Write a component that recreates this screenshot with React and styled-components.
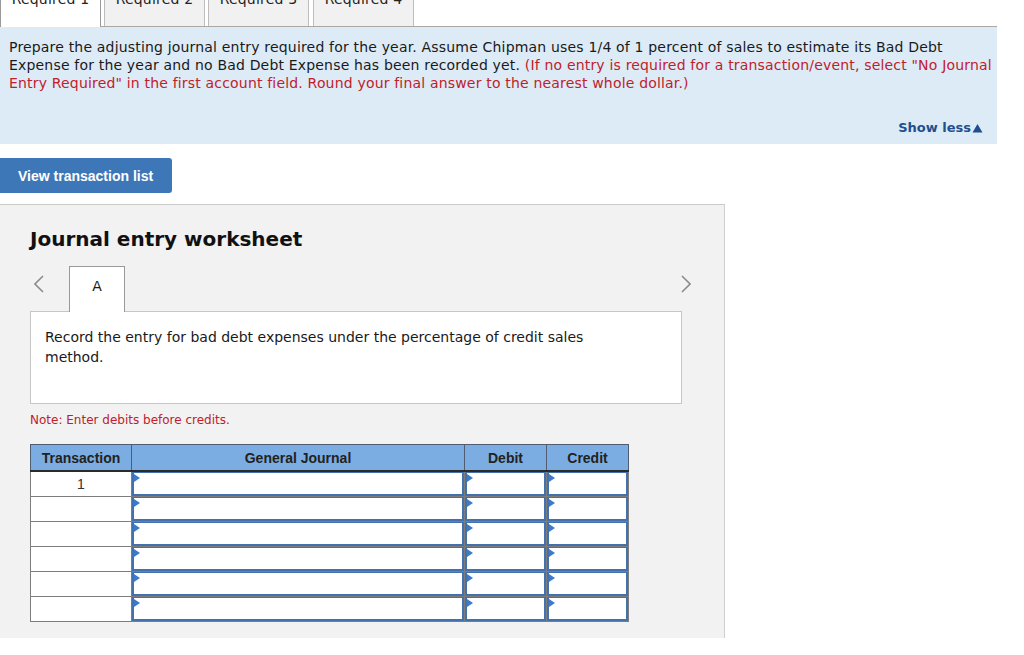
import styled, { createGlobalStyle } from "styled-components";

const GlobalStyle = createGlobalStyle`
  html, body {
    margin: 0;
    padding: 0;
    background: #ffffff;
    overflow: hidden;
  }
  body {
    font-family: "DejaVu Sans", Verdana, sans-serif;
    color: #1a1a1a;
  }
`;

const Page = styled.div`
  width: 997px;
`;

// top "Required" tabs, page is scrolled so their top is cut off
const TabBar = styled.div`
  display: flex;
  gap: 3px;
  height: 40px;
  margin-top: -14px;
  border-bottom: 1px solid #a8a8a8;
`;

const TopTab = styled.div`
  width: ${({ $w }) => $w}px;
  box-sizing: border-box;
  padding-top: 4px;
  text-align: center;
  font-size: 14px;
  line-height: 16px;
  letter-spacing: 0.2px;
  color: #222;
  border: 1px solid #bdbdbd;
  border-bottom: none;
  background: ${({ $active }) => ($active ? "#ffffff" : "#f1f1f1")};
  margin-bottom: ${({ $active }) => ($active ? "-1px" : "0")};
  height: ${({ $active }) => ($active ? "41px" : "40px")};
  ${({ $active }) => $active && "border-color: #9a9a9a;"}
  ${({ $gapLeft }) => $gapLeft && `margin-left: ${$gapLeft}px;`}
`;

const Instructions = styled.div`
  background: #ddebf7;
  height: 117px;
  box-sizing: border-box;
  padding: 11px 14px 0 9px;
  display: flex;
  flex-direction: column;
`;

const Prompt = styled.p`
  margin: 0 -14px 0 0;
  font-size: 14px;
  line-height: 18px;
  letter-spacing: 0.18px;
  color: #1a1a1a;
`;

const Hint = styled.span`
  color: #c0202a;
`;

const ShowLess = styled.div`
  margin-top: auto;
  margin-bottom: 9px;
  align-self: flex-end;
  font-size: 13px;
  font-weight: bold;
  color: #1f4f8d;
  display: flex;
  align-items: center;
  gap: 1px;
`;

const ListButton = styled.button`
  margin-top: 14px;
  width: 172px;
  height: 35px;
  border: none;
  border-radius: 0 3px 3px 0;
  background: #3d77b7;
  color: #ffffff;
  font-family: "Liberation Sans", Arial, sans-serif;
  font-size: 14px;
  font-weight: bold;
  text-align: left;
  padding: 0 0 0 18px;
  display: block;
`;

const Worksheet = styled.section`
  margin-top: 11px;
  width: 725px;
  height: 434px;
  box-sizing: border-box;
  background: #f2f2f2;
  border-top: 1px solid #c9c9c9;
  border-right: 1px solid #cfcfcf;
  padding: 21px 0 0 30px;
`;

const Heading = styled.h2`
  margin: 0;
  font-size: 20px;
  line-height: 26px;
  font-weight: bold;
  color: #111;
`;

const EntryNav = styled.div`
  margin-top: 14px;
  width: 665px;
  display: flex;
  align-items: flex-start;
`;

const Chevron = styled.div`
  width: ${({ $w }) => $w}px;
  height: 35px;
  box-sizing: border-box;
  padding-left: ${({ $pad }) => $pad || 0}px;
  display: flex;
  align-items: center;
  justify-content: ${({ $align }) => $align};
  color: #8c8c8c;
`;

const EntryTab = styled.div`
  width: 56px;
  height: 46px;
  box-sizing: border-box;
  background: #ffffff;
  border: 1px solid #999999;
  border-bottom: none;
  margin-bottom: -1px;
  position: relative;
  z-index: 1;
  font-size: 14px;
  text-align: center;
  padding-top: 11px;
`;

const EntryBox = styled.div`
  width: 652px;
  height: 93px;
  box-sizing: border-box;
  background: #ffffff;
  border: 1px solid #c6c6c6;
  padding: 15px 40px 0 14px;
  font-size: 14px;
  line-height: 20px;
`;

const Note = styled.p`
  margin: 7px 0 0;
  font-size: 12px;
  line-height: 18px;
  color: #c0202a;
`;

const Table = styled.table`
  margin-top: 15px;
  border-collapse: collapse;
  table-layout: fixed;
  font-family: "Liberation Sans", Arial, sans-serif;
`;

const Th = styled.th`
  width: ${({ $w }) => $w}px;
  height: 25px;
  padding: 0;
  background: #7badE2;
  border: 1px solid #4e5d72;
  border-bottom: 2px solid #2a2a2a;
  font-size: 14px;
  font-weight: bold;
  color: #222;
`;

const Td = styled.td`
  height: 24px;
  padding: 0;
  border: 1px solid #7d7d7d;
  background: #ffffff;
  text-align: center;
  font-size: 14px;
  color: #333;
  vertical-align: top;
  line-height: 24px;
`;

const Field = styled.div`
  height: 24px;
  box-sizing: border-box;
  border: 2px solid #4271ad;
  border-top-width: 1px;
  position: relative;
  background: #fff;

  &::before {
    content: "";
    position: absolute;
    left: 0;
    top: 1px;
    border-top: 4px solid transparent;
    border-bottom: 4px solid transparent;
    border-left: 6px solid #3a7bd0;
  }
`;

const ChevronIcon = ({ dir }) => (
  <svg width="10" height="18" viewBox="0 0 10 18" fill="none" stroke="currentColor" strokeWidth="1.6">
    <polyline points={dir === "left" ? "9,1 1,9 9,17" : "1,1 9,9 1,17"} />
  </svg>
);

const rows = [1, 2, 3, 4, 5, 6];

export default function App() {
  return (
    <Page>
      <GlobalStyle />
      <TabBar>
        <TopTab $w={101} $active>Required 1</TopTab>
        <TopTab $w={101}>Required 2</TopTab>
        <TopTab $w={101}>Required 3</TopTab>
        <TopTab $w={101} $gapLeft={1}>Required 4</TopTab>
      </TabBar>

      <Instructions>
        <Prompt>
          Prepare the adjusting journal entry required for the year. Assume Chipman uses 1/4 of 1 percent of sales to estimate its Bad Debt Expense for the year and no Bad Debt Expense has been recorded yet.{" "}
          <Hint>
            (If no entry is required for a transaction/event, select "No Journal Entry Required" in the first account field. Round your final answer to the nearest whole dollar.)
          </Hint>
        </Prompt>
        <ShowLess>
          Show less
          <svg width="11" height="10" viewBox="0 0 11 10">
            <polygon points="5.5,1 10.5,9.5 0.5,9.5" fill="#1f4f8d" />
          </svg>
        </ShowLess>
      </Instructions>

      <ListButton>View transaction list</ListButton>

      <Worksheet>
        <Heading>Journal entry worksheet</Heading>
        <EntryNav>
          <Chevron $w={39} $pad={4} $align="flex-start">
            <ChevronIcon dir="left" />
          </Chevron>
          <EntryTab>A</EntryTab>
          <Chevron $w={566} $align="flex-end">
            <ChevronIcon dir="right" />
          </Chevron>
        </EntryNav>
        <EntryBox>
          Record the entry for bad debt expenses under the percentage of credit sales method.
        </EntryBox>
        <Note>Note: Enter debits before credits.</Note>
        <Table>
          <thead>
            <tr>
              <Th $w={100}>Transaction</Th>
              <Th $w={332}>General Journal</Th>
              <Th $w={81}>Debit</Th>
              <Th $w={81}>Credit</Th>
            </tr>
          </thead>
          <tbody>
            {rows.map((n) => (
              <tr key={n}>
                <Td>{n === 1 ? "1" : ""}</Td>
                <Td><Field /></Td>
                <Td><Field /></Td>
                <Td><Field /></Td>
              </tr>
            ))}
          </tbody>
        </Table>
      </Worksheet>
    </Page>
  );
}
